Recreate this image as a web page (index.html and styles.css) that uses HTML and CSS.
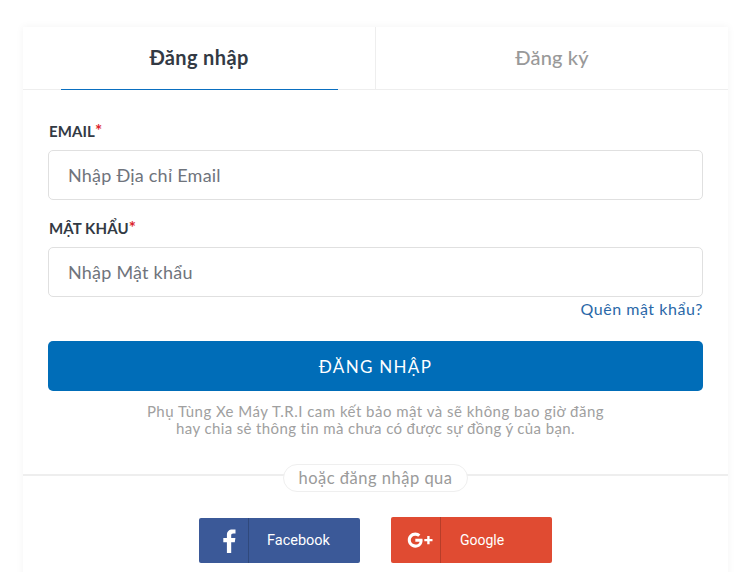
FILE: index.html
```html
<!DOCTYPE html>
<html lang="vi">
<head>
<meta charset="utf-8">
<title>Đăng nhập</title>
<link rel="stylesheet" href="styles.css">
</head>
<body>
<main class="card">
  <nav class="tabs">
    <a class="tab tab-active">Đăng nhập</a>
    <a class="tab tab-other">Đăng ký</a>
  </nav>
  <form class="form">
    <label class="label">EMAIL<span class="req">*</span></label>
    <div class="input">Nhập Địa chỉ Email</div>
    <label class="label label-second">MẬT KHẨU<span class="req">*</span></label>
    <div class="input">Nhập Mật khẩu</div>
    <div class="forgot-row"><a class="forgot">Quên mật khẩu?</a></div>
    <div class="submit">ĐĂNG NHẬP</div>
    <p class="note">Phụ Tùng Xe Máy T.R.I cam kết bảo mật và sẽ không bao giờ đăng<br><span class="note-second">hay chia sẻ thông tin mà chưa có được sự đồng ý của bạn.</span></p>
  </form>
  <div class="divider"><span class="divider-text">hoặc đăng nhập qua</span></div>
  <div class="socials">
    <a class="social fb">
      <span class="social-icon"><svg width="14" height="24" viewBox="0 0 14 24"><path fill="#fff" d="M9.2 24V13.2h3.6l.6-4.2H9.2V6.4c0-1.2.4-2 2.1-2h2.2V.6C13.100.5 11.800.4 10.300.4 7.100.4 4.900 2.300 4.900 5.900V9H1.300v4.200h3.600V24z"/></svg></span>
      <span class="social-name">Facebook</span>
    </a>
    <a class="social gg">
      <span class="social-icon"><svg width="26" height="16" viewBox="0 0 27.500 17.600"><path fill="#fff" d="M8.600 7.400v3.200h4.700c-.4 2-2.100 3.200-4.700 3.200-2.800 0-5-2.200-5-4.900s2.200-4.900 5-4.900c1.200 0 2.300.4 3.200 1.200l2.400-2.400C12.700 1.400 10.800.6 8.600.6 4 .6.300 4.300.300 8.900s3.700 8.300 8.300 8.300c4.800 0 8-3.400 8-8.100 0-.6-.1-1.200-.2-1.700z"/><path fill="#fff" d="M21.700 4.400h2.600v3.200h3.200v2.600h-3.200v3.200h-2.600v-3.200h-3.200v-2.600h3.200z"/></svg></span>
      <span class="social-name">Google</span>
    </a>
  </div>
</main>
</body>
</html>
```
FILE: styles.css
```css
* { box-sizing: border-box; }
html, body { margin: 0; height: 572px; overflow: hidden; background: #fff; }
body { padding: 27px 22px 0 23px; font-family: "Lato", "Noto Sans", sans-serif; }
.card { width: 705px; height: 560px; background: #fff; box-shadow: 0 0 8px rgba(0,0,0,.05); }
.tabs { display: flex; height: 63px; border-bottom: 1px solid #eeeeee; }
.tab { flex: 1; display: flex; align-items: center; justify-content: center; font-size: 20px; font-weight: 500; color: #999; padding-bottom: 2px; letter-spacing: .3px; }
.tab:first-child { border-right: 1px solid #eeeeee; flex: 0 0 353px; }
.tab-other { letter-spacing: .15px; }
.tab-active { position: relative; color: #333a44; font-weight: 700; letter-spacing: .35px; }
.tab-active::after { content: ""; position: absolute; left: 38px; width: 277px; bottom: -1px; height: 1px; background: #0a6fc0; }
.form { padding: 31px 25px 0; }
.label { display: block; padding-left: 1px; font-size: 15px; line-height: 20px; font-weight: 700; color: #333a44; letter-spacing: .1px; }
.label-second { margin-top: 18px; }
.req { color: #dc1f2e; font-size: 17px; line-height: 15px; }
.input { margin-top: 9px; height: 50px; border: 1px solid #e0e0e0; border-radius: 5px; padding-left: 19px; display: flex; align-items: center; font-size: 18px; color: #6f747c; letter-spacing: .22px; }
.forgot-row { display: flex; justify-content: flex-end; margin-top: 1px; height: 21px; }
.forgot { font-size: 16px; line-height: 21px; color: #2a68a8; letter-spacing: .55px; }
.submit { margin-top: 22px; height: 50px; background: #006db8; border-radius: 5px; display: flex; align-items: center; justify-content: center; color: #fff; font-size: 17px; letter-spacing: 1.3px; }
.note { margin: 12px 0 0; text-align: center; font-size: 15px; line-height: 17px; color: #a0a0a0; letter-spacing: .48px; }
.note-second { letter-spacing: .37px; }
.divider { margin-top: 37px; height: 2px; background: #eeeeee; display: flex; justify-content: center; align-items: center; }
.divider-text { position: relative; top: 3px; height: 28px; padding: 0 14px; background: #fff; border: 1px solid #efefef; border-radius: 14px; display: flex; align-items: center; font-size: 16.500px; color: #9a9a9a; letter-spacing: .5px; }
.socials { display: flex; justify-content: center; gap: 31px; margin-top: 42px; }
.social { display: flex; width: 161px; height: 45px; border-radius: 2px; color: #fff; font-family: "Roboto", sans-serif; font-size: 14.500px; }
.social-icon { width: 50px; display: flex; align-items: center; justify-content: center; border-right: 1px solid rgba(0,0,0,.18); }
.social-icon svg { margin-left: 9px; }
.fb .social-icon svg { margin-left: 10px; }
.social-name { flex: 1; display: flex; align-items: center; padding-left: 18px; }
.fb { background: #3b5998; }
.gg { background: #e04b32; height: 46px; margin-top: -1px; }
.gg .social-name { padding-left: 19px; font-size: 14px; }
```
